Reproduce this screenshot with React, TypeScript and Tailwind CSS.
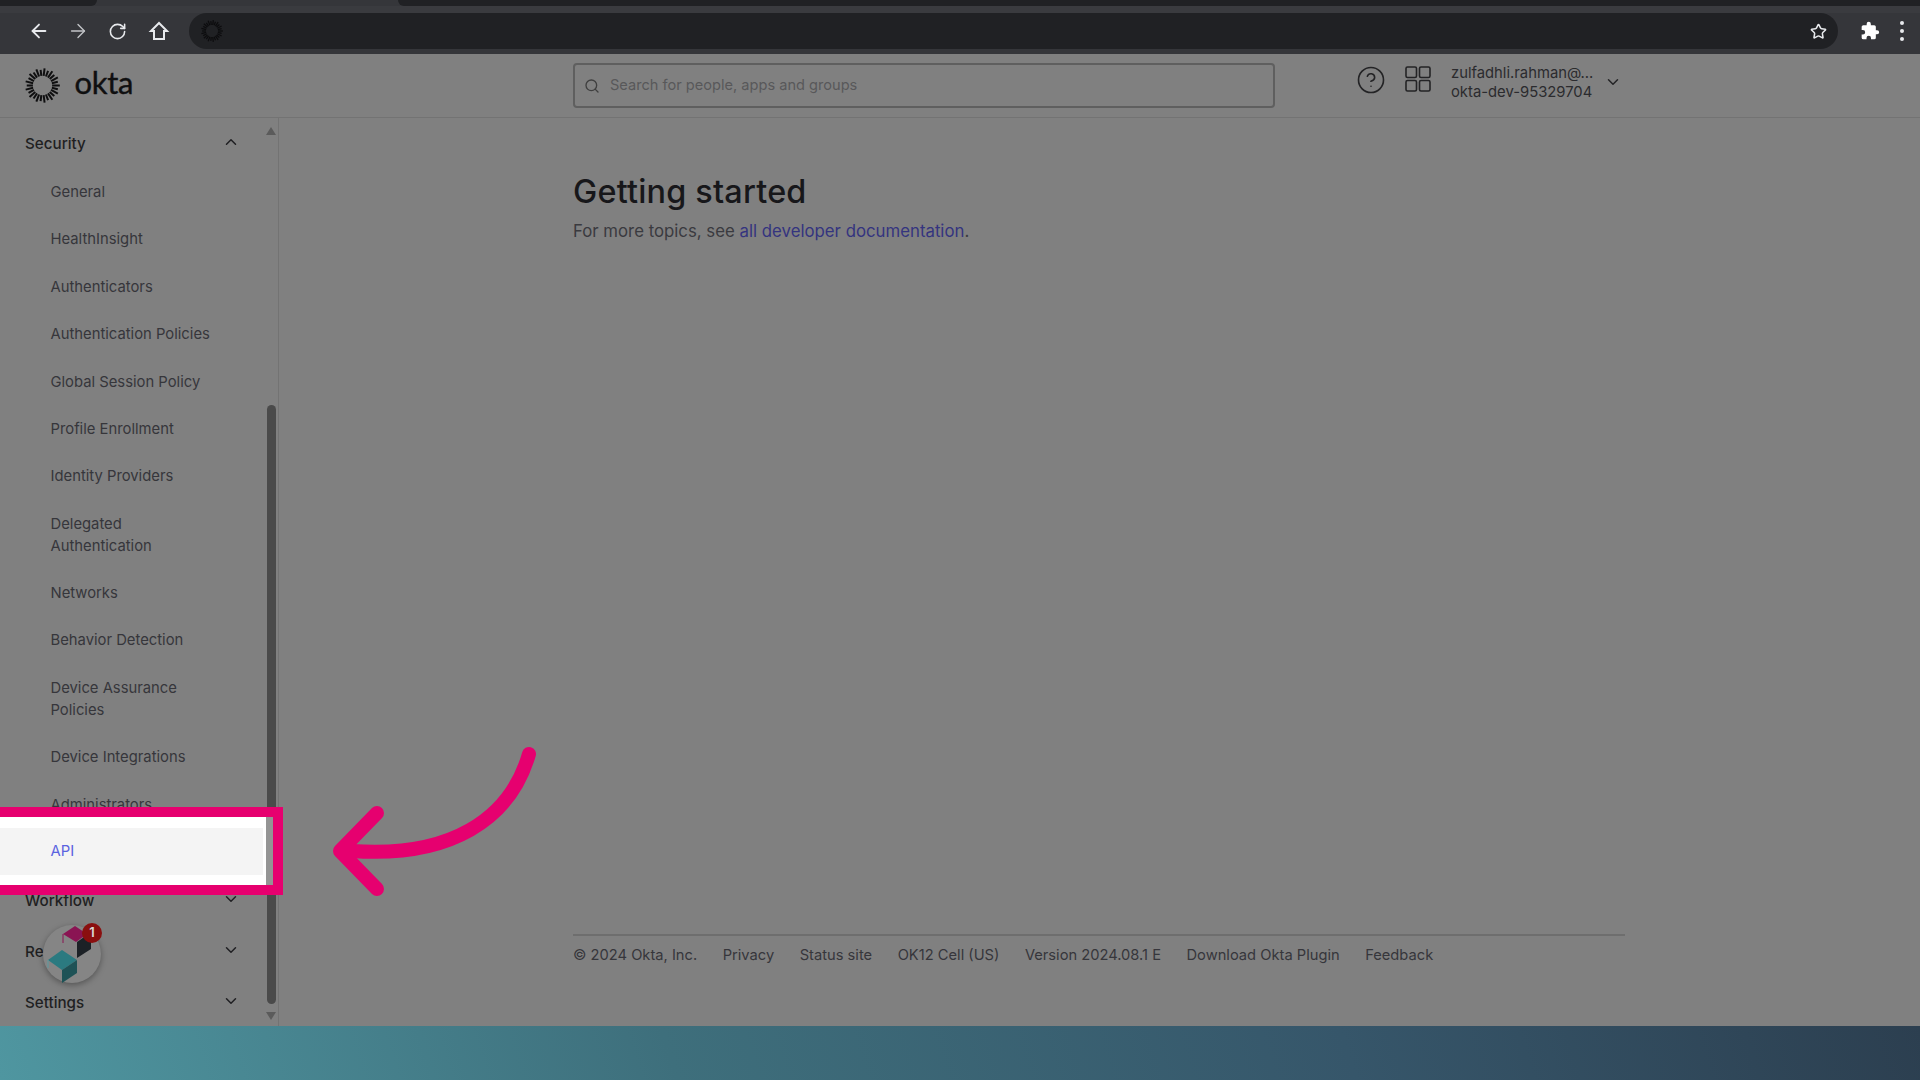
import React from "react";
import { ArrowLeft, ArrowRight, RotateCw, Search, ChevronDown, ChevronUp, Star, CircleHelp } from "lucide-react";

function Burst({ size, color }: { size: number; color: string }) {
  const rays = Array.from({ length: 26 }, (_, i) => i);
  return (
    <svg width={size} height={size} viewBox="0 0 40 40">
      {rays.map((i) => {
        const a = (i / 26) * Math.PI * 2;
        const r0 = 11;
        const r1 = i % 2 === 0 ? 19.8 : 18;
        return (
          <line
            key={i}
            x1={20 + Math.cos(a) * r0}
            y1={20 + Math.sin(a) * r0}
            x2={20 + Math.cos(a) * r1}
            y2={20 + Math.sin(a) * r1}
            stroke={color}
            strokeWidth={2.3}
          />
        );
      })}
    </svg>
  );
}

function Item({ children, two, className }: { children: React.ReactNode; two?: boolean; className?: string }) {
  return (
    <div className={`shrink-0 pl-[50.5px] pr-4 py-[12.7px] text-[14.8px] leading-[22px] text-[#36363b] ${two ? "w-[215px]" : ""} ${className ?? ""}`}>
      {children}
    </div>
  );
}

function Head({ label, open, className }: { label: string; open?: boolean; className?: string }) {
  return (
    <div className={`shrink-0 flex items-center justify-between pl-[25px] pr-[25px] text-[15.2px] font-medium text-[#1f1f22] ${className ?? "h-[50.4px]"}`}>
      <span>{label}</span>
      {open ? (
        <ChevronUp size={18} strokeWidth={2} className="text-[#1f1f22] -mt-[5px]" />
      ) : (
        <ChevronDown size={18} strokeWidth={2} className="text-[#1f1f22] -mt-[5px]" />
      )}
    </div>
  );
}

export default function App() {
  return (
    <div className="relative w-[1920px] h-[1080px] overflow-hidden bg-[#808080] flex flex-col font-['Inter',sans-serif]">
      {/* Browser chrome */}
      <div className="h-[54px] shrink-0 bg-[#35363a] flex flex-col">
        <div className="h-[6px] flex">
          <div className="w-[97px] bg-[#202124] rounded-br-md" />
          <div className="w-[301px] bg-[#35363a]" />
          <div className="flex-1 bg-[#202124] rounded-bl-md" />
        </div>
        <div className="h-[7px] bg-[#3a3b3f]" />
        <div className="flex-1 flex items-start">
          <div className="w-[189px] h-[36px] flex items-center text-[#e8eaed] relative">
            <ArrowLeft size={22} strokeWidth={2} className="ml-[28px]" />
            <ArrowRight size={22} strokeWidth={1.5} className="ml-[17px] text-[#c2c4c7]" />
            <RotateCw size={19} strokeWidth={2} className="ml-[19px]" />
            <svg width="22" height="22" viewBox="0 0 22 22" className="ml-[21px]" fill="none" stroke="#e8eaed" strokeWidth="2" strokeLinejoin="miter">
              <path d="M11 3 L3 11 H6 V19 H16 V11 H19 Z" />
            </svg>
          </div>
          <div className="w-[1649px] h-[36px] bg-[#202124] rounded-[18px] flex items-center justify-between pl-[12px] pr-[10px]">
            <Burst size={22} color="#0c0c0e" />
            <Star size={17} strokeWidth={2.2} className="text-[#e8eaed] mr-[1px]" />
          </div>
          <div className="flex-1 h-[36px] flex items-center text-[#f1f1f1] relative">
            <svg width="20" height="20" viewBox="0 0 24 24" className="ml-[22px]" fill="#ffffff">
              <path d="M20.5 11H19V7a2 2 0 0 0-2-2h-4V3.5a2.5 2.5 0 0 0-5 0V5H4a2 2 0 0 0-2 2v3.8h1.5a2.7 2.7 0 0 1 0 5.4H2V20a2 2 0 0 0 2 2h3.8v-1.5a2.7 2.7 0 0 1 5.4 0V22H17a2 2 0 0 0 2-2v-4h1.5a2.5 2.5 0 0 0 0-5z" />
            </svg>
            <div className="ml-[20px] flex flex-col gap-[4px]">
              <span className="block w-[4px] h-[4px] rounded-full bg-[#e8eaed]" />
              <span className="block w-[4px] h-[4px] rounded-full bg-[#e8eaed]" />
              <span className="block w-[4px] h-[4px] rounded-full bg-[#e8eaed]" />
            </div>
          </div>
        </div>
      </div>

      {/* Okta header */}
      <div className="h-[64px] shrink-0 border-b border-[#737373] flex items-center">
        <div className="w-[573px] flex items-center pl-[24.5px] shrink-0">
          <Burst size={35} color="#0f0f10" />
          <span className="ml-[15px] -mt-[6px] text-[31px] leading-none tracking-[-0.3px] text-[#0f0f10] [-webkit-text-stroke:0.4px_#0f0f10] font-['Lato',sans-serif]">okta</span>
        </div>
        <div className="w-[702px] h-[45px] -mt-[1px] border-2 border-[#5f5f5f] rounded-[4px] flex items-center pl-[9px] pt-[2px] shrink-0">
          <Search size={16} strokeWidth={2} className="text-[#3f3f3f]" />
          <span className="ml-[10px] text-[14.6px] text-[#58585a]">Search for people, apps and groups</span>
        </div>
        <div className="ml-[81px] -mt-[12px]">
          <CircleHelp size={30} strokeWidth={1.3} className="text-[#232325]" />
        </div>
        <svg width="26" height="26" viewBox="0 0 26 26" className="ml-[19px] -mt-[14px]" fill="none" stroke="#232325" strokeWidth="1.6">
          <rect x="1" y="1" width="10.5" height="10.5" rx="1.5" />
          <rect x="14.5" y="1" width="10.5" height="10.5" rx="1.5" />
          <rect x="1" y="14.5" width="10.5" height="10.5" rx="1.5" />
          <rect x="14.5" y="14.5" width="10.5" height="10.5" rx="1.5" />
        </svg>
        <div className="ml-[20px] -mt-[6px] text-[14.8px] leading-[19px] text-[#2b2b2e]">
          <div>zulfadhli.rahman@...</div>
          <div>okta-dev-95329704</div>
        </div>
        <ChevronDown size={18} strokeWidth={2} className="ml-[11px] -mt-[7px] text-[#232325]" />
      </div>

      {/* Body */}
      <div className="flex-1 min-h-0 flex">
        <aside className="w-[279px] shrink-0 border-r border-[#737373] flex pt-px">
          <nav className="w-[265px] shrink-0 flex flex-col overflow-hidden">
            <Head label="Security" open className="h-[49.4px] pt-[1px]" />
            <Item>General</Item>
            <Item>HealthInsight</Item>
            <Item>Authenticators</Item>
            <Item>Authentication Policies</Item>
            <Item>Global Session Policy</Item>
            <Item>Profile Enrollment</Item>
            <Item>Identity Providers</Item>
            <Item two>Delegated Authentication</Item>
            <Item>Networks</Item>
            <Item>Behavior Detection</Item>
            <Item two>Device Assurance Policies</Item>
            <Item>Device Integrations</Item>
            <Item>Administrators</Item>
            <Item className="mb-[1px]">API</Item>
            <Head label="Workflow" />
            <Head label="Reports" />
            <Head label="Settings" className="h-[50.4px] mt-[1px]" />
          </nav>
          <div className="w-[12px] shrink-0 flex flex-col items-center">
            <svg width="10" height="8" viewBox="0 0 10 8" className="mt-[8px]" fill="#5b5b5b">
              <path d="M5 0 L10 8 H0 Z" />
            </svg>
            <div className="w-[9px] h-[599px] mt-[270px] bg-[#4a4a4a] rounded-full" />
            <svg width="10" height="8" viewBox="0 0 10 8" className="mt-[8px]" fill="#5b5b5b">
              <path d="M0 0 H10 L5 8 Z" />
            </svg>
          </div>
        </aside>
        <main className="flex-1 min-w-0 flex flex-col pl-[294px]">
          <div className="w-[1052px] flex-1 flex flex-col">
            <h1 className="mt-[52px] text-[32.4px] leading-[44px] font-medium text-[#17171a] tracking-[0.2px]">Getting started</h1>
            <p className="mt-[5px] text-[16.8px] leading-[24px] text-[#3a3a3f]">
              For more topics, see <span className="text-[#34347f]">all developer documentation</span>.
            </p>
            <div className="mt-auto border-t-2 border-[#6e6e6e] h-[92px] pt-[8px] flex gap-[25.5px] text-[14.7px] leading-[22px] text-[#36363b]">
              <span>© 2024 Okta, Inc.</span>
              <span>Privacy</span>
              <span>Status site</span>
              <span>OK12 Cell (US)</span>
              <span>Version 2024.08.1 E</span>
              <span>Download Okta Plugin</span>
              <span>Feedback</span>
            </div>
          </div>
        </main>
      </div>

      {/* Bottom gradient */}
      <div className="h-[54px] shrink-0 bg-[linear-gradient(72deg,#4f96a0_0%,#3e6f7c_35%,#36566a_70%,#2c3f50_100%)]" />

      {/* Highlight box */}
      <div className="absolute left-0 top-[807px] w-[283px] h-[88px] border-y-[10px] border-r-[10px] border-[#e6006f] bg-white flex items-center">
        <div className="w-[263px] h-[47px] bg-[#f4f4f4] pl-[50.5px] pt-[1px] flex items-center text-[14.8px] text-[#5a63e0]">API</div>
        <div className="ml-[3px] w-[7px] h-full bg-[#949494]" />
      </div>

      {/* Arrow */}
      <svg width="230" height="160" viewBox="0 0 230 160" className="absolute left-[320px] top-[740px]" fill="none" stroke="#e6006f" strokeLinecap="round" strokeLinejoin="round">
        <path d="M209 14 C190 80 130 118 32 111" strokeWidth="14" />
        <path d="M57 73 L20 111 L57 149" strokeWidth="14" />
      </svg>

      {/* Floating widget */}
      <div className="absolute left-[43px] top-[925px] w-[58px] h-[58px] rounded-full bg-[#858585] shadow-[0_2px_6px_rgba(0,0,0,0.35)]">
        <svg width="58" height="58" viewBox="0 0 58 58" className="absolute left-0 top-0">
          <path d="M20 9 L32 1 L44 9 L33 17 Z" fill="#8a1453" />
          <path d="M20 9 V18" stroke="#8a1453" strokeWidth="1" />
          <path d="M34 17 L44 10 L48 11 V24 L34 33 Z" fill="#1c2126" />
          <path d="M5 35 L19 25 L34 35 L19 45 Z" fill="#2b7a80" />
          <path d="M19 45 L34 35 V48 L19 58 Z" fill="#1e5256" />
          <path d="M5 35 V43" stroke="#5a9aa0" strokeWidth="1" />
        </svg>
        <div className="absolute left-[39px] -top-[2px] w-[20px] h-[20px] rounded-full bg-[#8a0f0f] flex items-center justify-center text-[13px] font-semibold text-[#d8d8d8]">1</div>
      </div>
    </div>
  );
}
